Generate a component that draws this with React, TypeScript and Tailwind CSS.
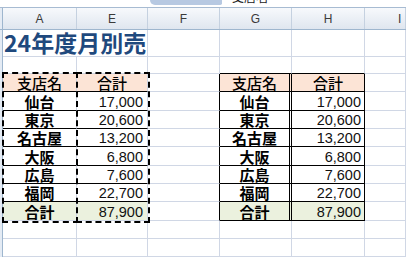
import React from "react";

const GRID = "border-[#d0d7e5]";
const rowHs = [18, 19, 18, 18, 19, 18, 18, 19, 18, 18];
const hCls = (h: number) => (h === 18 ? "h-[18px]" : "h-[19px]");

const names = ["支店名", "仙台", "東京", "名古屋", "大阪", "広島", "福岡", "合計"];
const nums = ["合計", "17,000", "20,600", "13,200", "6,800", "7,600", "22,700", "87,900"];

const jp = { fontFamily: '"Noto Sans CJK JP", "Noto Sans", sans-serif' };
const num = { fontFamily: '"Liberation Sans", Arial, sans-serif' };

function bgFor(i: number) {
  if (i === 0) return "bg-[#fce4d6]";
  if (i === 7) return "bg-[#ebf1de]";
  return "bg-white";
}

function TopCells({ noRight, title }: { noRight?: boolean; title?: boolean }) {
  return (
    <div
      className={`h-[27px] shrink-0 border-b ${GRID} ${noRight ? "" : "border-r"} flex items-end`}
    >
      {title && (
        <span
          className="whitespace-nowrap pl-[1px] pb-[2px] text-[23px] font-bold leading-none text-[#1f497d]"
          style={jp}
        >
          24年度月別売
        </span>
      )}
    </div>
  );
}

function NameText({ n, i }: { n: string; i: number }) {
  return (
    <span
      className={`text-[15px] leading-[15px] text-black ${i === 0 ? "font-medium" : "font-bold"}`}
      style={jp}
    >
      {n}
    </span>
  );
}

function NumText({ n }: { n: string }) {
  return (
    <span className="pb-[1px] text-[14.5px] leading-[14px] text-[#111]" style={num}>
      {n}
    </span>
  );
}

function NameCol() {
  return (
    <div className="flex w-[74px] shrink-0 flex-col">
      <TopCells noRight title />
      <div className={`h-[17px] shrink-0 border-b border-r ${GRID}`} />
      <div className="relative">
        {names.map((n, i) => (
          <div
            key={i}
            className={`${hCls(rowHs[i])} ${bgFor(i)} flex shrink-0 items-center justify-center border-r ${GRID} border-b ${
              i < 7 ? "border-b-black" : ""
            }`}
          >
            <NameText n={n} i={i} />
          </div>
        ))}
        <div className="pointer-events-none absolute -left-px -top-[2px] bottom-[-2px] right-[-2px] border-2 border-dashed border-black" />
      </div>
      {rowHs.slice(8).map((h, i) => (
        <div key={i} className={`${hCls(h)} shrink-0 border-b border-r ${GRID}`} />
      ))}
    </div>
  );
}

function NumCol() {
  return (
    <div className="flex w-[71px] shrink-0 flex-col">
      <TopCells />
      <div className={`h-[17px] shrink-0 border-b border-r ${GRID}`} />
      <div className="relative">
        {nums.map((n, i) => (
          <div
            key={i}
            className={`${hCls(rowHs[i])} ${bgFor(i)} flex shrink-0 border-r ${GRID} border-b ${
              i < 7 ? "border-b-black" : ""
            } ${i === 0 ? "items-center justify-center" : "items-end justify-end pr-[4px]"}`}
          >
            {i === 0 ? <NameText n={n} i={0} /> : <NumText n={n} />}
          </div>
        ))}
        <div className="pointer-events-none absolute -left-px -top-[2px] bottom-[-2px] right-[-2px] border-2 border-dashed border-black" />
      </div>
      {rowHs.slice(8).map((h, i) => (
        <div key={i} className={`${hCls(h)} shrink-0 border-b border-r ${GRID}`} />
      ))}
    </div>
  );
}

function PlainCol({ w, blackRight }: { w: string; blackRight?: boolean }) {
  return (
    <div className={`flex ${w} shrink-0 flex-col`}>
      <TopCells />
      <div className={`h-[17px] shrink-0 border-b border-r ${GRID}`} />
      {rowHs.map((h, i) => (
        <div
          key={i}
          className={`${hCls(h)} shrink-0 border-b border-r ${GRID} ${blackRight && i < 8 ? "border-r-black" : ""}`}
        />
      ))}
    </div>
  );
}

function GCol() {
  return (
    <div className="flex w-[72px] shrink-0 flex-col">
      <TopCells />
      <div className={`h-[17px] shrink-0 border-b border-r ${GRID} border-b-black`} />
      {names.map((n, i) => (
        <div
          key={i}
          className={`${hCls(rowHs[i])} ${bgFor(i)} flex shrink-0 items-center justify-center border-b border-b-black border-r-[3px] border-double border-r-black`}
        >
          <NameText n={n} i={i} />
        </div>
      ))}
      {rowHs.slice(8).map((h, i) => (
        <div key={i} className={`${hCls(h)} shrink-0 border-b border-r ${GRID}`} />
      ))}
    </div>
  );
}

function HCol() {
  return (
    <div className="flex w-[73px] shrink-0 flex-col">
      <TopCells />
      <div className={`h-[17px] shrink-0 border-b border-r ${GRID} border-b-black`} />
      {nums.map((n, i) => (
        <div
          key={i}
          className={`${hCls(rowHs[i])} ${bgFor(i)} flex shrink-0 border-b border-r border-black ${
            i === 0 ? "items-center justify-center" : "items-end justify-end pr-[3px]"
          }`}
        >
          {i === 0 ? <NameText n={n} i={0} /> : <NumText n={n} />}
        </div>
      ))}
      {rowHs.slice(8).map((h, i) => (
        <div key={i} className={`${hCls(h)} shrink-0 border-b border-r ${GRID}`} />
      ))}
    </div>
  );
}

function HeaderCell({ w, label, extra }: { w: string; label: string; extra?: string }) {
  return (
    <div
      className={`${w} flex h-full shrink-0 items-center border-r border-[#c5d1e0] ${extra ?? "justify-center"} text-[12px] text-[#3a3a3a]`}
      style={num}
    >
      {label}
    </div>
  );
}

export default function App() {
  return (
    <div className="h-[257px] w-[406px] overflow-hidden bg-white">
      {/* top strip */}
      <div className="flex h-[7px] items-start overflow-hidden bg-white">
        <div className="w-[150px] shrink-0" />
        <div className="h-[5px] w-[72px] shrink-0 rounded-bl-[6px] rounded-br-[2px] bg-[#b7c9e2]" />
        <div className="ml-[10px] -mt-[9px] text-[12px] leading-none text-[#222]" style={jp}>
          支店名
        </div>
      </div>
      {/* column header */}
      <div className="flex h-[23px] border-y border-t-[#a7bbd2] border-b-[#9eb6ce] bg-gradient-to-b from-[#f7f9fc] to-[#dfe6ef]">
        <div className="h-full w-[3px] shrink-0 border-r border-[#9eb6ce] bg-[#e4ebf4]" />
        <HeaderCell w="w-[74px]" label="A" />
        <HeaderCell w="w-[71px]" label="E" />
        <HeaderCell w="w-[72px]" label="F" />
        <HeaderCell w="w-[72px]" label="G" />
        <HeaderCell w="w-[73px]" label="H" />
        <HeaderCell w="w-[41px]" label="I" extra="justify-start pl-[33px]" />
      </div>
      {/* body */}
      <div className="flex">
        <div className="h-[227px] w-[3px] shrink-0 border-r border-[#9eb6ce] bg-[#e4ebf4]" />
        <NameCol />
        <NumCol />
        <PlainCol w="w-[72px]" blackRight />
        <GCol />
        <HCol />
        <PlainCol w="w-[41px]" />
      </div>
    </div>
  );
}
